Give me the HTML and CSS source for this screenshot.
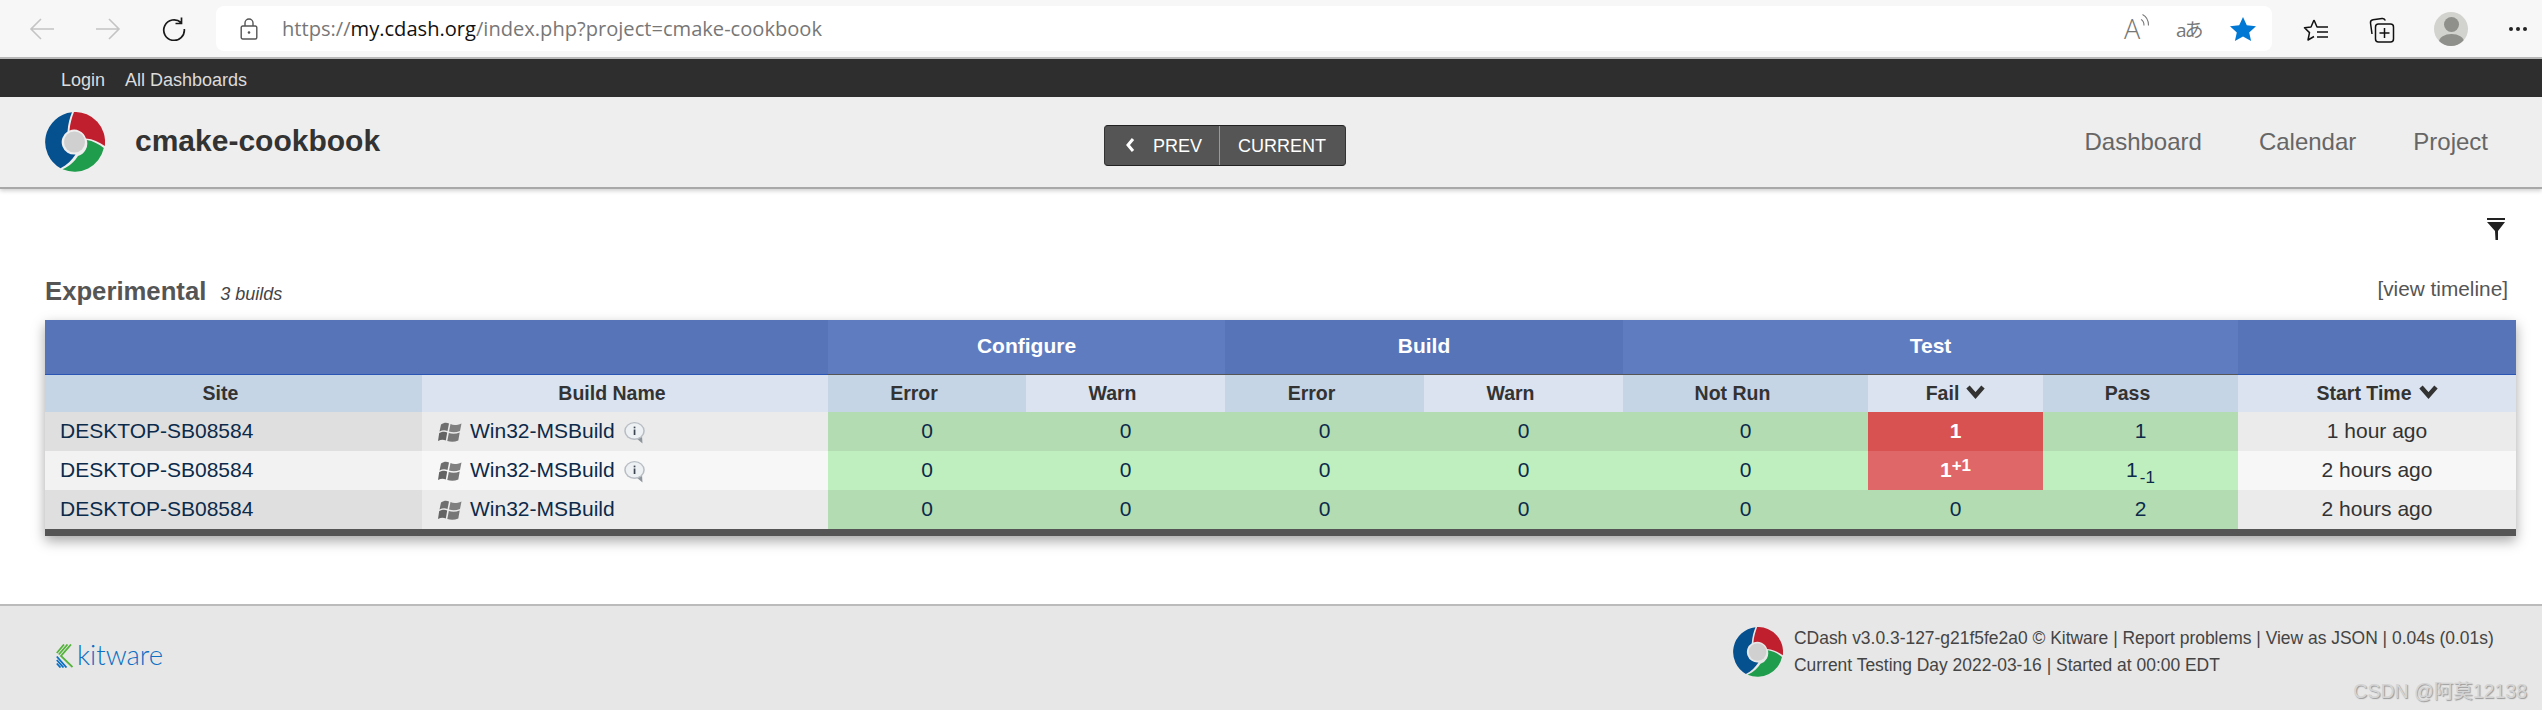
FILE: index.html
```html
<!DOCTYPE html>
<html lang="en">
<head>
<meta charset="utf-8">
<title>CDash - cmake-cookbook</title>
<link rel="stylesheet" href="styles.css">
</head>
<body>
<svg class="defs" width="0" height="0" aria-hidden="true">
  <defs>
    <symbol id="cdash" viewBox="0 0 60 60">
      <path fill="#05508f" d="M27 .3A30 30 0 0 0 15.500 56.300C22 53 27 48 30.500 42.500A12.500 12.500 0 0 1 22.500 19.500C23 12 25 5 27 .3Z"/>
      <path fill="#c0202e" d="M29 0A30 30 0 0 1 59.800 34C54 30 48 27 41 26.500A12.500 12.500 0 0 0 24.500 18.500C25 12 27 5 29 0Z"/>
      <path fill="#1f9d4d" d="M58.800 36A30 30 0 0 1 17.500 57.200C25 54 30 49 33 44A13 13 0 0 0 41.800 28C48 29 54 32 58.800 36Z"/>
      <circle cx="29.500" cy="30" r="10.500" fill="#d0d0d0"/>
    </symbol>
    <symbol id="win" viewBox="0 0 24 22">
      <path fill="#6f6f6f" d="M3 3.500C6 1.500 8.500 1.500 11 2.500L9.500 10C7 9 4.500 9 1.500 10.500Z"/>
      <path fill="#808080" d="M12.500 3C15.500 4.500 18.500 4.500 23.500 2.500L22 10C18 11.500 14.500 11.500 11 10.500Z"/>
      <path fill="#646464" d="M1.200 12C4.500 10.500 7 10.500 9.200 11.500L7.800 19.500C5.500 18.500 3 18.500 0 20Z"/>
      <path fill="#777" d="M10.800 12C14 13 18 13 21.700 11.500L20.300 19.500C16.500 21 13 21 9.300 20Z"/>
    </symbol>
    <symbol id="info" viewBox="0 0 21 22">
      <path fill="#8d949c" d="M12 16l6.500 5.500-.5-7z"/>
      <ellipse cx="10.500" cy="9" rx="10.300" ry="9" fill="#b7bdc3"/>
      <ellipse cx="10.500" cy="8.800" rx="8.800" ry="7.600" fill="#eef1f4"/>
      <rect x="9.700" y="7.500" width="1.700" height="5.500" fill="#3d4650"/>
      <rect x="9.700" y="4.600" width="1.700" height="1.700" fill="#3d4650"/>
    </symbol>
    <symbol id="chev" viewBox="0 0 19 14">
      <path fill="none" stroke="#333" stroke-width="4.500" d="M2 2l7.500 8.500L17 2"/>
    </symbol>
  </defs>
</svg>

<div class="toolbar">
  <div class="nav-icons">
    <svg class="ico" viewBox="0 0 26 24"><path fill="none" stroke="#c4c4c4" stroke-width="1.600" d="M25 12H2M12 2L2 12l10 10"/></svg>
    <svg class="ico" viewBox="0 0 26 24"><path fill="none" stroke="#c4c4c4" stroke-width="1.600" d="M1 12h23M14 2l10 10-10 10"/></svg>
    <svg class="ico" viewBox="0 0 26 24"><path fill="none" stroke="#1a1a1a" stroke-width="1.700" d="M20 5.500A10.300 10.300 0 1 0 23.300 12M20.500 .5v6h-6"/></svg>
  </div>
  <div class="address">
    <svg class="lock" viewBox="0 0 18 22"><path fill="none" stroke="#555" stroke-width="1.400" d="M5 8V5a4 4 0 0 1 8 0v3M2.700 8h12.600a1.500 1.500 0 0 1 1.500 1.500v10a1.500 1.500 0 0 1-1.500 1.500H2.700a1.500 1.500 0 0 1-1.500-1.500v-10A1.500 1.500 0 0 1 2.700 8Z"/><circle cx="9" cy="14.500" r="1.300" fill="#555"/></svg>
    <div class="url">https://<span class="domain">my.cdash.org</span>/index.php?project=cmake-cookbook</div>
    <div class="addr-tools">
      <div class="read"><span class="read-a">A</span><svg class="waves" viewBox="0 0 10 14"><path fill="none" stroke="#777" stroke-width="1.100" d="M1 6c2 1 3 3 3 6M2.500 1c4 2 6 6 6 11"/></svg></div>
      <span class="translate">aあ</span>
      <svg class="star" viewBox="0 0 26 24"><path fill="#0078d4" d="M13 0l3.800 8.300 9.200 1-6.800 6.200 1.900 8.500L13 19.500 4.900 24l1.900-8.500L0 9.300l9.200-1z"/></svg>
    </div>
  </div>
  <div class="app-tools">
    <svg class="tool" viewBox="0 0 26 26"><path fill="none" stroke="#111" stroke-width="1.500" stroke-linejoin="round" d="M11 3l3 7h4M11 3L8 10l-6.500.8 5 4.800-1.500 7.400 6-3.500M14 15h11M14 20h11M16 10h9"/></svg>
    <svg class="tool" viewBox="0 0 26 26"><path fill="none" stroke="#111" stroke-width="1.500" d="M3 17L1.500 6c-.2-2 .8-3 2.500-3.300L13 1.500c1.600-.2 2.800.4 3.300 2M9.500 7h12c2 0 3 1 3 3v12c0 2-1 3-3 3h-12c-2 0-3-1-3-3V10c0-2 1-3 3-3ZM15.500 11v10M10.500 16h10"/></svg>
    <div class="avatar"><span class="head"></span><span class="shoulders"></span></div>
    <div class="dots"><span></span><span></span><span></span></div>
  </div>
</div>

<div class="topbar"><a>Login</a><a>All Dashboards</a></div>

<header class="site-header">
  <div class="brand">
    <svg class="brand-logo"><use href="#cdash"/></svg>
    <span class="brand-name">cmake-cookbook</span>
  </div>
  <div class="pager">
    <a class="pager-btn prev"><svg class="pager-chev" viewBox="0 0 10 14"><path fill="none" stroke="#fff" stroke-width="3" d="M8 1L3 7l5 6"/></svg>PREV</a>
    <a class="pager-btn cur">CURRENT</a>
  </div>
  <nav class="site-nav"><a>Dashboard</a><a>Calendar</a><a>Project</a></nav>
</header>

<main class="content">
  <div class="filter-row">
    <svg class="filter" viewBox="0 0 18 22"><path fill="#222" d="M0 0h18v2H0zM0 4h18l-7 9v9H8.500l-.5-9z"/></svg>
  </div>
  <div class="section-head">
    <div class="section-title"><h2>Experimental</h2><em>3 builds</em></div>
    <a class="timeline">[view timeline]</a>
  </div>
  <table class="builds">
    <colgroup>
      <col class="c-site"><col class="c-name"><col class="c-e1"><col class="c-w1"><col class="c-e2"><col class="c-w2"><col class="c-nr"><col class="c-fail"><col class="c-pass"><col class="c-time">
    </colgroup>
    <thead>
      <tr class="groups">
        <th colspan="2" class="g-dark g-open"></th>
        <th colspan="2" class="g-light">Configure</th>
        <th colspan="2" class="g-dark">Build</th>
        <th colspan="3" class="g-light">Test</th>
        <th class="g-dark g-open"></th>
      </tr>
      <tr class="subs">
        <th class="s1">Site<i class="sort off"></i></th>
        <th class="s2">Build Name<i class="sort off"></i></th>
        <th class="s1">Error<i class="sort off"></i></th>
        <th class="s2">Warn<i class="sort off"></i></th>
        <th class="s1">Error<i class="sort off"></i></th>
        <th class="s2">Warn<i class="sort off"></i></th>
        <th class="s1">Not Run<i class="sort off"></i></th>
        <th class="s2">Fail<svg class="sort"><use href="#chev"/></svg></th>
        <th class="s1">Pass<i class="sort off"></i></th>
        <th class="s2">Start Time<svg class="sort"><use href="#chev"/></svg></th>
      </tr>
    </thead>
    <tbody>
      <tr>
        <td class="site">DESKTOP-SB08584</td>
        <td class="name"><div class="name-in"><svg class="win"><use href="#win"/></svg><span>Win32-MSBuild</span><svg class="info"><use href="#info"/></svg></div></td>
        <td class="ok">0</td><td class="ok">0</td><td class="ok">0</td><td class="ok">0</td><td class="ok">0</td>
        <td class="bad">1</td><td class="ok">1</td><td class="time">1 hour ago</td>
      </tr>
      <tr>
        <td class="site">DESKTOP-SB08584</td>
        <td class="name"><div class="name-in"><svg class="win"><use href="#win"/></svg><span>Win32-MSBuild</span><svg class="info"><use href="#info"/></svg></div></td>
        <td class="ok">0</td><td class="ok">0</td><td class="ok">0</td><td class="ok">0</td><td class="ok">0</td>
        <td class="bad">1<sup>+1</sup></td><td class="ok">1<sub>-1</sub></td><td class="time">2 hours ago</td>
      </tr>
      <tr>
        <td class="site">DESKTOP-SB08584</td>
        <td class="name"><div class="name-in"><svg class="win"><use href="#win"/></svg><span>Win32-MSBuild</span></div></td>
        <td class="ok">0</td><td class="ok">0</td><td class="ok">0</td><td class="ok">0</td><td class="ok">0</td>
        <td class="ok">0</td><td class="ok">2</td><td class="time">2 hours ago</td>
      </tr>
    </tbody>
  </table>
</main>

<footer class="site-footer">
  <div class="kitware">
    <svg class="kw-mark" viewBox="0 0 17 24">
      <path fill="none" stroke="#55b33b" stroke-width="1.800" d="M8 .5L.8 9M11.500 .5L2.800 10.500M15 .5L5 12l11.500 11"/>
      <path fill="none" stroke="#0b6fc4" stroke-width="1.800" d="M.8 12.500l9.700 11M.8 16l6.700 7.500M.8 19.500l3.700 4"/>
    </svg>
    <span class="kw-name">kitware</span>
  </div>
  <div class="foot-info">
    <svg class="foot-logo"><use href="#cdash"/></svg>
    <div class="foot-text">
      <div>CDash v3.0.3-127-g21f5fe2a0 © Kitware | Report problems | View as JSON | 0.04s (0.01s)</div>
      <div>Current Testing Day 2022-03-16 | Started at 00:00 EDT</div>
    </div>
  </div>
  <span class="watermark">CSDN @阿莫12138</span>
</footer>
</body>
</html>
```

FILE: styles.css
```css
* { box-sizing: border-box; }
html, body { margin: 0; padding: 0; background: #fff; }
body {
  width: 2542px;
  height: 714px;
  overflow: hidden;
  font-family: "Liberation Sans", Arial, sans-serif;
  font-size: 21px;
  color: #333;
}
.defs { display: block; height: 0; }

/* browser chrome */
.toolbar {
  height: 59px;
  display: flex;
  align-items: flex-start;
  background: #f7f7f7;
  border-bottom: 2px solid #b8b8b8;
}
.nav-icons {
  width: 216px;
  display: flex;
  gap: 40px;
  padding: 17px 0 0 29px;
}
.ico { width: 26px; height: 24px; }
.address {
  width: 2056px;
  height: 45px;
  margin-top: 6px;
  background: #fff;
  border-radius: 8px;
  display: flex;
  align-items: center;
  padding: 0 16px 0 24px;
}
.lock { width: 18px; height: 22px; }
.url {
  margin-left: 24px;
  flex: 1;
  font-family: "Open Sans", sans-serif;
  font-size: 20.100px;
  color: #777;
  white-space: nowrap;
}
.domain { color: #111; }
.addr-tools { display: flex; align-items: center; }
.read { display: flex; align-items: flex-start; width: 52px; color: #777; }
.read-a { font-family: "Open Sans", sans-serif; font-size: 27px; line-height: 30px; font-weight: 300; }
.waves { width: 10px; height: 15px; margin-top: -1px; }
.translate {
  width: 54px;
  font-family: "Open Sans", "Noto Sans CJK JP", sans-serif;
  font-size: 19px;
  color: #777;
  letter-spacing: -2px;
}
.star { width: 26px; height: 24px; }
.app-tools { display: flex; align-items: center; padding: 12px 0 0 31px; }
.tool { width: 26px; height: 26px; margin-right: 40px; margin-top: 2px; }
.avatar {
  width: 34px;
  height: 34px;
  border-radius: 50%;
  background: #d2d2ce;
  display: flex;
  flex-direction: column;
  align-items: center;
  overflow: hidden;
  margin-left: -1px;
}
.head { width: 15px; height: 15px; margin-top: 5px; border-radius: 50%; background: #8f8f8b; flex: none; }
.shoulders { width: 25px; height: 16px; margin-top: 2px; border-radius: 50% 50% 0 0; background: #8f8f8b; flex: none; }
.dots { display: flex; gap: 3px; margin-left: 41px; }
.dots span { width: 4px; height: 4px; background: #222; border-radius: 50%; }

/* dark bar */
.topbar {
  height: 38px;
  background: #2e2e2e;
  display: flex;
  align-items: flex-end;
  gap: 20px;
  padding: 0 0 6px 61px;
  color: #dcdcdc;
  font-size: 18px;
  line-height: 22px;
}

/* site header */
.site-header {
  height: 92px;
  background: #eee;
  border-bottom: 2px solid #a8a8a8;
  box-shadow: 0 2px 4px rgba(0,0,0,.18);
  display: grid;
  grid-template-columns: 1104px 242px 1fr;
  align-items: start;
}
.brand { display: flex; align-items: center; padding: 15px 0 0 45px; }
.brand-logo { width: 60px; height: 60px; }
.brand-name { margin-left: 30px; font-size: 30px; font-weight: 700; color: #333; margin-top: -3px; }
.pager {
  margin-top: 28px;
  height: 41px;
  display: flex;
  background: #555;
  border: 1px solid #333;
  border-top-color: #222;
  border-bottom-color: #222;
  border-radius: 4px;
  color: #fff;
  font-size: 18px;
}
.pager-btn { display: flex; align-items: center; padding-top: 1px; }
.prev { width: 115px; padding-left: 20px; border-right: 1px solid #999; }
.cur { flex: 1; padding-left: 18px; }
.pager-chev { width: 10px; height: 14px; margin-right: 18px; margin-top: -3px; }
.site-nav {
  display: flex;
  justify-content: flex-end;
  gap: 57px;
  padding: 31px 54px 0 0;
  font-size: 24px;
  color: #666;
}

/* content */
.content { padding: 29px 26px 0 45px; height: 415px; }
.filter-row { display: flex; justify-content: flex-end; padding-right: 11px; }
.filter { width: 18px; height: 22px; }
.section-head {
  margin-top: 36px;
  height: 30px;
  display: flex;
  justify-content: space-between;
  align-items: center;
}
.section-title { display: flex; align-items: baseline; }
.section-title h2 { margin: 0; font-size: 25.700px; line-height: 30px; font-weight: 700; color: #555; }
.section-title em { margin-left: 14px; font-size: 18px; color: #444; }
.timeline { margin-right: 8px; margin-top: -4px; color: #555; font-size: 20.800px; }

.builds {
  margin-top: 14px;
  width: 2471px;
  table-layout: fixed;
  border-collapse: separate;
  border-spacing: 0;
  border-bottom: 7px solid #555;
  box-shadow: 0 5px 12px rgba(0,0,0,.35);
}
.c-site { width: 377px; }
.c-name { width: 406px; }
.c-e1 { width: 198px; }
.c-w1, .c-e2, .c-w2 { width: 199px; }
.c-nr { width: 245px; }
.c-fail { width: 175px; }
.c-pass { width: 195px; }
.c-time { width: 278px; }

.builds th, .builds td { padding: 0; text-align: center; }
.groups th {
  height: 55px;
  padding-bottom: 2px;
  color: #fff;
  font-size: 21px;
  font-weight: 700;
  border-bottom: 1px solid #555;
}
.g-dark { background: #5674b7; }
.g-light { background: #5f7cc0; }
.groups .g-open { border-bottom-color: #2a55b5; }
.subs th { height: 37px; padding-bottom: 1px; font-size: 19.500px; font-weight: 700; color: #333; }
.s1 { background: #c6d5e6; }
.s2 { background: #dae3ef; }
.sort { display: inline-block; width: 19px; height: 14px; margin-left: 7px; vertical-align: 1px; }
.off { visibility: hidden; }

.builds td { height: 39px; padding-bottom: 2px; font-size: 21px; color: #0c2a4a; }
.builds .site { text-align: left; padding-left: 15px; background: #dfdfdf; }
.name { background: #ebebeb; }
.name-in { display: flex; align-items: center; padding-left: 16px; }
.win { width: 24px; height: 22px; flex: none; margin-top: 3px; }
.name-in span { margin-left: 8px; }
.info { width: 21px; height: 22px; flex: none; margin-left: 9px; margin-top: 5px; }
.ok { background: #b3dcb3; }
.builds .bad { background: #d95252; color: #fff; font-weight: 700; }
.builds .time { background: #ebebeb; color: #333; padding-bottom: 1px; }
.builds tbody tr:nth-child(2) .site { background: #f2f2f2; }
.builds tbody tr:nth-child(2) .name,
.builds tbody tr:nth-child(2) .time { background: #f7f7f7; }
.builds tbody tr:nth-child(2) .ok { background: #bfefbf; }
.builds tbody tr:nth-child(2) .bad { background: #e06767; }
.builds sup { font-size: 17px; line-height: 0; vertical-align: 6px; }
.builds sub { font-size: 17px; line-height: 0; vertical-align: -6px; margin-left: 2px; }

/* footer */
.site-footer {
  position: relative;
  height: 106px;
  background: #e7e7e7;
  border-top: 2px solid #bbb;
  display: flex;
  justify-content: space-between;
  padding: 21px 0 0 56px;
}
.kitware { display: flex; align-items: flex-start; padding-top: 17px; }
.kw-mark { width: 17px; height: 24px; }
.kw-name { margin-left: 4px; margin-top: -5px; font-family: Lato, sans-serif; font-weight: 300; font-size: 27.500px; line-height: 32px; color: #0b6fc4; }
.foot-info { display: flex; width: 809px; }
.foot-logo { width: 50px; height: 50px; flex: none; }
.foot-text { margin-left: 11px; font-size: 17.450px; line-height: 27px; color: #444; white-space: nowrap; margin-top: -2px; }
.watermark {
  position: absolute;
  right: 15px;
  bottom: 8px;
  font-family: "Liberation Sans", "Noto Sans CJK SC", sans-serif;
  font-size: 19.500px;
  line-height: 22px;
  color: #d4d4d4;
  text-shadow: 1px 1px 1px #999;
}
```
